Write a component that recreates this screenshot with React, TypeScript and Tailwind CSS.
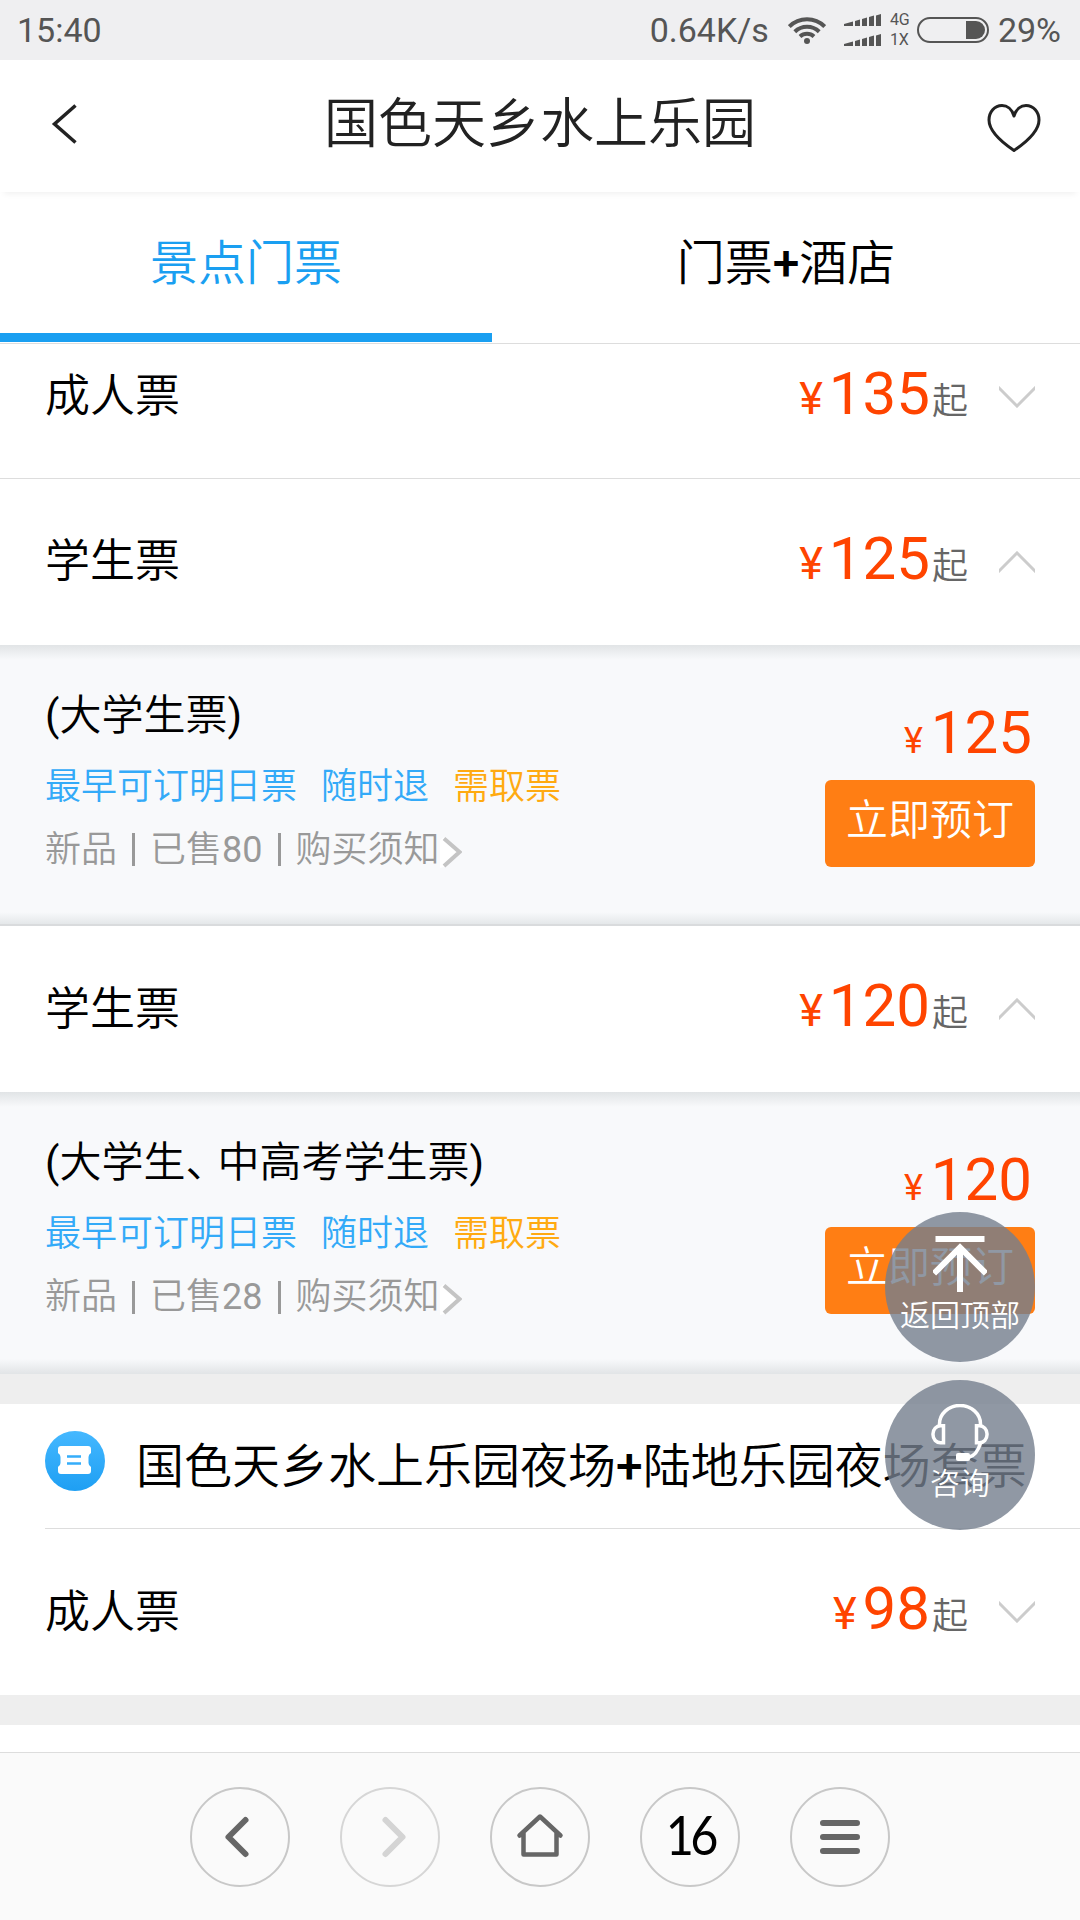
import React from "react";

interface TicketRowProps {
    name: string;
    price: number;
    open?: boolean;
}

interface TicketDetailProps {
    title: React.ReactNode;
    sold: number;
    price: number;
}

function SignalBars() {
    return (
        <svg width="38" height="12" viewBox="0 0 38 12" fill="#555">
            <path d="M0 10l9-2.5V12H0z" />
            <path d="M11 7l5-1.5V12h-5z" />
            <path d="M18 5l5-1.5V12h-5z" />
            <path d="M25 3l5-1.5V12h-5z" />
            <path d="M32 1.5L37 0V12h-5z" />
        </svg>
    );
}

function WifiIcon() {
    return (
        <svg
            width="38"
            height="28"
            viewBox="0 0 38 28"
            fill="none"
            stroke="#555"
            strokeWidth="4"
        >
            <path d="M1.300 10.500a25 25 0 0 1 35.400 0" />
            <path d="M6.800 15.700a17.500 17.500 0 0 1 24.400 0" />
            <path d="M12 20.500a10.500 10.500 0 0 1 14 0" />
            <circle cx="19" cy="25" r="3" fill="#555" stroke="none" />
        </svg>
    );
}

function StatusBar() {
    return (
        <div className="flex h-[60px] items-center bg-[#efeff1] pr-[19px] pl-[17px] text-[34px] leading-[60px] text-[#555]">
            <span>15:40</span>
            <span className="mr-[19px] ml-auto">0.64K/s</span>
            <WifiIcon />
            <div className="ml-[18px] flex flex-col gap-2">
                <SignalBars />
                <SignalBars />
            </div>
            <div className="ml-2 flex w-[22px] flex-col text-base leading-5">
                <span>4G</span>
                <span>1X</span>
            </div>
            <div className="ml-[5px] flex h-[26px] w-[72px] justify-end rounded-full border-2 border-[#555] p-0.5">
                <div className="w-[19px] rounded-r-full bg-[#555]" />
            </div>
            <span className="ml-[9px]">29%</span>
        </div>
    );
}

function Header() {
    return (
        <div className="relative flex h-[132px] items-center justify-between bg-white pr-[39px] pl-[51px] shadow-[0_6px_6px_-4px_rgba(0,0,0,0.06)]">
            <svg
                width="54"
                height="42"
                viewBox="0 0 54 42"
                fill="none"
                stroke="#222"
                strokeWidth="3.5"
                className="mb-1"
            >
                <path d="M24.500 2.500L3.500 21l21 18.500" />
            </svg>
            <h1 className="mr-[12px] mb-[2px] text-[54px] leading-[64px] font-[350] text-[#222]">
                国色天乡水上乐园
            </h1>
            <svg
                width="54"
                height="50"
                viewBox="0 0 54 50"
                fill="none"
                stroke="#222"
                strokeWidth="3"
                strokeLinejoin="round"
                className="mt-1"
            >
                <path d="M27 13C25 6 20 2.500 15 2.500 7.500 2.500 2 9 2 17c0 11 11 21 25 30.500C41 38 52 28 52 17c0-8-5.500-14.500-13-14.500C34 2.500 29 6 27 13z" />
            </svg>
        </div>
    );
}

function Tabs() {
    return (
        <div className="flex h-[152px] border-b border-[#ddd] text-5xl leading-[60px] font-[350]">
            <div className="mb-px w-[492px] border-b-9 border-[#1a9ff1] pt-[42px] text-center text-[#1a9ff1]">
                景点门票
            </div>
            <div className="flex-1 pt-[42px] text-center">
                门票<span className="font-medium">+</span>酒店
            </div>
        </div>
    );
}

function TicketRow({ name, price, open }: TicketRowProps) {
    return (
        <div className="flex h-[166px] shrink-0 items-center bg-white px-[45px]">
            <span className="mt-px text-[45px] leading-[60px] font-[350]">
                {name}
            </span>
            <div className="mb-px ml-auto flex items-baseline leading-[60px] text-[#ff4400]">
                <span className="text-[45px]">¥</span>
                <span className="ml-[6px] text-[60px]">{price}</span>
                <span className="ml-[2px] text-4xl font-[350] text-[#666]">
                    起
                </span>
            </div>
            <svg
                width="36"
                height="22"
                viewBox="0 0 36 22"
                fill="none"
                stroke="#ccc"
                strokeWidth="3"
                className={open ? "ml-[31px] rotate-180" : "ml-[31px]"}
            >
                <path d="M-1 1L18 20 37 1" />
            </svg>
        </div>
    );
}

function TicketDetail({ title, sold, price }: TicketDetailProps) {
    return (
        <div className="flex h-[282px] justify-between bg-[#f8f9fb] bg-[linear-gradient(to_bottom,#e1e4e6,#f8f9fb_15px,#f8f9fb_267px,#e1e4e6)] px-[45px]">
            <div className="pt-[41px] font-[350]">
                <p className="text-[42px] leading-[60px]">
                    <span className="font-normal">(</span>
                    {title}
                    <span className="font-normal">)</span>
                </p>
                <div className="mt-[11px] flex gap-6 text-4xl leading-[60px] text-[#33aaf8]">
                    <span>最早可订明日票</span>
                    <span>随时退</span>
                    <span className="text-[#ffaa11]">需取票</span>
                </div>
                <div className="mt-[3px] flex items-center text-4xl leading-[60px] text-[#999]">
                    <span>新品</span>
                    <i className="mx-[15px] h-[33px] w-[3px] bg-[#999]" />
                    <span>
                        已售<span className="font-normal">{sold}</span>
                    </span>
                    <i className="mx-[15px] h-[33px] w-[3px] bg-[#999]" />
                    <span>购买须知</span>
                    <svg
                        width="22"
                        height="32"
                        viewBox="0 0 22 32"
                        fill="none"
                        className="mt-1"
                    >
                        <path d="M0 32V4l4-3 15 15L4 31z" fill="#fff" />
                        <path
                            d="M4 2.500L19.500 16 4 30"
                            stroke="#c4c4c4"
                            strokeWidth="4"
                        />
                    </svg>
                </div>
            </div>
            <div className="flex flex-col items-end pt-[58px]">
                <div className="flex items-baseline pr-[3px] leading-[60px] text-[#ff4400]">
                    <span className="text-4xl">¥</span>
                    <span className="ml-2 text-[60px]">{price}</span>
                </div>
                <button className="mt-[17px] flex h-[87px] w-[210px] justify-center rounded-md bg-[#ff7e14] pt-[11px] text-[42px] leading-[60px] font-[350] text-white">
                    立即预订
                </button>
            </div>
        </div>
    );
}

function GroupTitle() {
    return (
        <div className="ml-[45px] flex h-[125px] items-center border-b border-[#ddd]">
            <svg width="60" height="60" viewBox="0 0 60 60" className="mb-[10px]">
                <defs>
                    <linearGradient id="ticketBg" x1="0" y1="0" x2="0" y2="1">
                        <stop offset="0" stopColor="#45b8ff" />
                        <stop offset="1" stopColor="#1e9ff3" />
                    </linearGradient>
                </defs>
                <circle cx="30" cy="30" r="30" fill="url(#ticketBg)" />
                <path
                    d="M16 15h27a3 3 0 0 1 3 3v4q-2.500 1.500-2.500 4v6q0 2.500 2.500 4v4a3 3 0 0 1-3 3H16a3 3 0 0 1-3-3v-4q2.500-1.500 2.500-4v-6q0-2.500-2.500-4v-4a3 3 0 0 1 3-3z"
                    fill="#fff"
                />
                <path
                    d="M22 25.500h14M22 32.500h14"
                    stroke="#35adfa"
                    strokeWidth="2.500"
                />
            </svg>
            <span className="mt-[2px] ml-[31px] text-5xl leading-[60px] font-[350] whitespace-nowrap">
                国色天乡水上乐园夜场<span className="font-medium">+</span>
                陆地乐园夜场套票
            </span>
        </div>
    );
}

// buttons that stay on top of the list
function FloatingActions() {
    return (
        <div className="absolute top-[1212px] right-[45px] flex flex-col gap-[18px] text-3xl leading-[36px] font-[350] text-white">
            <div className="flex h-[150px] w-[150px] flex-col items-center rounded-full bg-[rgba(116,126,141,0.8)] pt-6">
                <svg
                    width="54"
                    height="56"
                    viewBox="0 0 54 56"
                    fill="none"
                    stroke="#fff"
                    strokeWidth="6"
                >
                    <path d="M2.500 3h49" />
                    <path d="M27 56V11M1 37.500L27 11.500l26 26" />
                </svg>
                <span className="mt-[6px]">返回顶部</span>
            </div>
            <div className="flex h-[150px] w-[150px] flex-col items-center rounded-full bg-[rgba(116,126,141,0.8)] pt-6">
                <svg
                    width="58"
                    height="57"
                    viewBox="0 0 58 57"
                    fill="none"
                    stroke="#fff"
                    strokeWidth="3.500"
                >
                    <path d="M8.500 21v-1a20.500 18.500 0 0 1 41 0v1" />
                    <path d="M12.500 21.800H9.500a7.500 8 0 0 0-7.500 8v1a7.500 8 0 0 0 7.500 8h3zM45.500 21.800h3a7.500 8 0 0 1 7.500 8v1a7.500 8 0 0 1-7.500 8h-3z" />
                    <path d="M49.500 39c-2 7-6 13-12 14.500" />
                    <rect
                        x="25"
                        y="49"
                        width="14"
                        height="8"
                        rx="2"
                        fill="#fff"
                        stroke="none"
                    />
                </svg>
                <span className="mt-[5px]">咨询</span>
            </div>
        </div>
    );
}

function NavButton({
    children,
    disabled,
}: {
    children: React.ReactNode;
    disabled?: boolean;
}) {
    return (
        <button
            className={
                disabled
                    ? "flex h-[100px] w-[100px] items-center justify-center rounded-full border-2 border-[#d6d6d6] text-[#d4d4d4]"
                    : "flex h-[100px] w-[100px] items-center justify-center rounded-full border-2 border-[#c8c8c8] text-[#666]"
            }
        >
            {children}
        </button>
    );
}

function NavIcon({ d, width = 6 }: { d: string; width?: number }) {
    return (
        <svg
            width="50"
            height="50"
            viewBox="0 0 50 50"
            fill="none"
            stroke="currentColor"
            strokeWidth={width}
            strokeLinecap="round"
            strokeLinejoin="round"
        >
            <path d={d} />
        </svg>
    );
}

function BottomNav() {
    return (
        <div className="flex h-[168px] items-center justify-center gap-[50px] border-t border-[#ddd] bg-[#fafafa]">
            <NavButton>
                <NavIcon d="M30.500 8L13.500 25l17 17" />
            </NavButton>
            <NavButton disabled>
                <NavIcon d="M20.500 8l17 17-17 17" />
            </NavButton>
            <NavButton>
                <NavIcon
                    width={4.5}
                    d="M4.500 23.500L25 4.500l20.500 19M8.500 21v21.500h33V21"
                />
            </NavButton>
            <NavButton>
                <span className="mb-[3px] scale-x-90 font-[Lato] text-[54px] leading-[60px] tracking-[-4px] text-black">
                    16
                </span>
            </NavButton>
            <NavButton>
                <NavIcon d="M8 11h34M8 25h34M8 39h34" />
            </NavButton>
        </div>
    );
}

function App() {
    return (
        <div className="relative flex h-[1920px] w-[1080px] flex-col overflow-hidden bg-white font-[Roboto,'Noto_Sans_CJK_SC',sans-serif] font-normal text-black">
            <StatusBar />
            <Header />
            <Tabs />
            {/* first row is scrolled partly under the tabs */}
            <div className="flex h-[135px] flex-col justify-end overflow-hidden border-b border-[#ddd]">
                <div className="-mb-[2px]">
                    <TicketRow name="成人票" price={135} />
                </div>
            </div>
            <TicketRow name="学生票" price={125} open />
            <TicketDetail title="大学生票" sold={80} price={125} />
            <div className="-mt-[2px] h-[2px] bg-[#d9dbdd]" />
            <TicketRow name="学生票" price={120} open />
            <TicketDetail
                title={
                    <>
                        大学生
                        <span className="tracking-[-10px]">、</span>
                        中高考学生票
                    </>
                }
                sold={28}
                price={120}
            />
            <div className="h-[30px] bg-[#eee]" />
            <GroupTitle />
            <TicketRow name="成人票" price={98} />
            <div className="mb-[27px] h-[30px] bg-[#eee]" />
            <BottomNav />
            <FloatingActions />
        </div>
    );
}

export default App;
